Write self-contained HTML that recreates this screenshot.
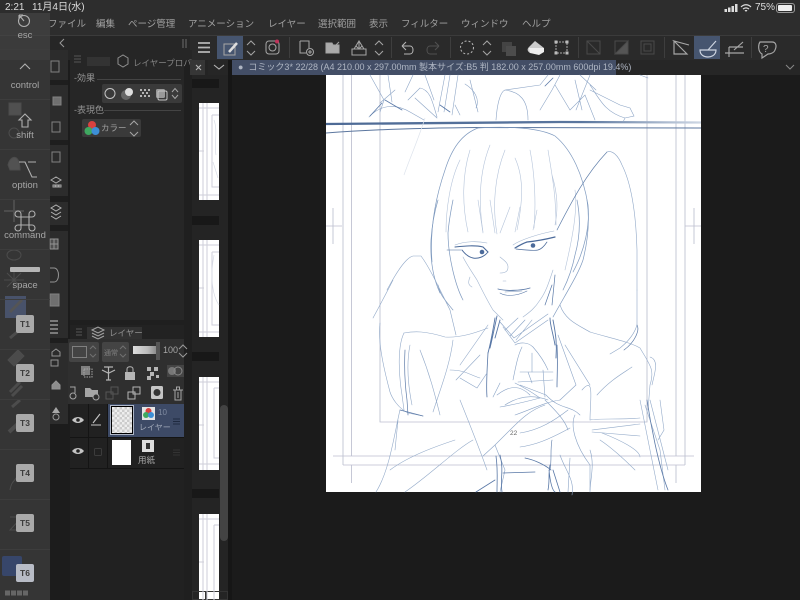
<!DOCTYPE html>
<html><head><meta charset="utf-8">
<style>
html,body{margin:0;padding:0;background:#1b1b1b;}
#r{position:relative;width:800px;height:600px;overflow:hidden;background:#1a1a1a;font-family:"Liberation Sans","Noto Sans CJK JP",sans-serif;color:#aaa;filter:blur(.35px);}
.a{position:absolute;}
.t{position:absolute;white-space:nowrap;line-height:1;}
.m{position:absolute;white-space:nowrap;line-height:1;top:20px;font-size:9.500px;color:#a0a0a0;}
.ov{position:absolute;left:0;width:50px;text-align:center;font-size:9.500px;color:#a6a6a6;line-height:1;}
.key{position:absolute;left:16px;width:18px;height:18px;background:#a9a9a9;border-radius:2px;color:#3c3c3c;font-size:8.500px;font-weight:bold;line-height:18px;text-align:center;}
svg{position:absolute;left:0;top:0;}
</style></head><body>
<div id="r">
<!-- top bars -->
<div class="a" style="left:0;top:0;width:800px;height:35px;background:#2d2d2d"></div>
<div class="a" style="left:0;top:35px;width:800px;height:25px;background:#2a2a2a;border-top:1px solid #3b3b3b;box-sizing:border-box"></div>
<div class="a" style="left:50px;top:36px;width:140px;height:14px;background:#262626"></div>
<!-- menu -->
<div class="m" style="left:48px">ファイル</div>
<div class="m" style="left:96px">編集</div>
<div class="m" style="left:128px">ページ管理</div>
<div class="m" style="left:188px">アニメーション</div>
<div class="m" style="left:268px">レイヤー</div>
<div class="m" style="left:318px">選択範囲</div>
<div class="m" style="left:369px">表示</div>
<div class="m" style="left:401px">フィルター</div>
<div class="m" style="left:461px">ウィンドウ</div>
<div class="m" style="left:522px">ヘルプ</div>

<!-- canvas area -->
<div class="a" style="left:190px;top:60px;width:610px;height:540px;background:#1b1b1b"></div>
<div class="a" style="left:232px;top:60px;width:568px;height:15px;background:#262626"></div>
<div class="a" style="left:232px;top:60px;width:384px;height:15px;background:#434e66"></div>
<div class="t" style="left:238px;top:62.500px;font-size:9px;color:#aeb5c2">●&nbsp; コミック3* 22/28 (A4 210.00 x 297.00mm 製本サイズ:B5 判 182.00 x 257.00mm 600dpi 19.4%)</div>
<div class="a" style="left:326px;top:75px;width:375px;height:417px;background:#fff"></div>

<!-- sub tool col + panels -->
<div class="a" style="left:50px;top:50px;width:18px;height:550px;background:#2c2c2c"></div>
<div class="a" style="left:50px;top:80px;width:18px;height:5px;background:#1e1e1e"></div>
<div class="a" style="left:50px;top:140px;width:18px;height:5px;background:#1e1e1e"></div>
<div class="a" style="left:50px;top:196px;width:18px;height:6px;background:#1e1e1e"></div>
<div class="a" style="left:50px;top:225px;width:18px;height:6px;background:#1e1e1e"></div>
<div class="a" style="left:50px;top:338px;width:18px;height:5px;background:#1e1e1e"></div>
<div class="a" style="left:50px;top:424px;width:18px;height:176px;background:#1c1c1c"></div>
<div class="a" style="left:68px;top:50px;width:124px;height:550px;background:#262626"></div>
<div class="a" style="left:68px;top:60px;width:2px;height:540px;background:#1c1c1c"></div>
<div class="a" style="left:184px;top:60px;width:8px;height:540px;background:#1f1f1f"></div>
<div class="a" style="left:70px;top:320px;width:114px;height:6px;background:#1f1f1f"></div>
<div class="a" style="left:70px;top:325px;width:114px;height:14px;background:#222"></div>
<!-- property panel -->
<div class="a" style="left:87px;top:57px;width:23px;height:9px;background:#333"></div>
<div class="t" style="left:133px;top:59px;font-size:8.500px;color:#858585">レイヤープロパ</div>
<div class="t" style="left:74px;top:74px;font-size:9px;color:#949494">-効果</div>
<div class="a" style="left:97px;top:79px;width:84px;height:1px;background:#444"></div>
<div class="a" style="left:102px;top:84px;width:80px;height:19px;background:#3a3a3a;border-radius:2px"></div>
<div class="t" style="left:74px;top:106px;font-size:9px;color:#949494">-表現色</div>
<div class="a" style="left:104px;top:110px;width:77px;height:1px;background:#444"></div>
<div class="a" style="left:82px;top:119px;width:59px;height:18px;background:#3a3a3a;border-radius:2px"></div>
<div class="t" style="left:101px;top:124px;font-size:8.500px;color:#a0a0a0">カラー</div>

<!-- layer panel -->
<div class="a" style="left:87px;top:327px;width:55px;height:12px;background:#323232"></div>
<div class="t" style="left:109px;top:329px;font-size:8.500px;color:#929292">レイヤー</div>
<div class="a" style="left:68px;top:339px;width:116px;height:65px;background:#2f2f2f"></div>
<div class="a" style="left:69px;top:342px;width:30px;height:20px;background:#444;border-radius:2px"></div>
<div class="a" style="left:102px;top:342px;width:27px;height:20px;background:#444;border-radius:2px"></div>
<div class="a" style="left:133px;top:346px;width:24px;height:8px;background:linear-gradient(90deg,#ddd,#bbb 60%,#888)"></div>
<div class="a" style="left:156px;top:342px;width:4px;height:18px;background:#555"></div>
<div class="t" style="left:163px;top:346px;font-size:9px;color:#a6a6a6">100</div>
<div class="a" style="left:70px;top:404px;width:114px;height:196px;background:#212121"></div>
<div class="a" style="left:108px;top:404px;width:76px;height:33px;background:#3d4a66"></div>
<div class="a" style="left:70px;top:437px;width:114px;height:1px;background:#141414"></div>
<div class="a" style="left:70px;top:468px;width:114px;height:1px;background:#141414"></div>
<div class="a" style="left:88px;top:404px;width:1px;height:64px;background:#141414"></div>
<div class="a" style="left:107px;top:404px;width:1px;height:64px;background:#141414"></div>
<div class="a" style="left:110px;top:405px;width:24px;height:30px;box-sizing:border-box;border:1px solid #aeb6c6;background:#000"></div>
<div class="a" style="left:112px;top:407px;width:20px;height:26px;background:conic-gradient(#ccc 25%,#eee 0 50%,#ccc 0 75%,#eee 0) 0 0/5px 5px"></div>
<div class="a" style="left:112px;top:440px;width:19px;height:25px;background:#fff"></div>
<div class="a" style="left:142px;top:407px;width:13px;height:13px;background:#e4e4e4"></div>
<div class="a" style="left:142px;top:440px;width:12px;height:12px;background:#ddd"></div>
<div class="a" style="left:146px;top:443px;width:4px;height:6px;background:#333"></div>
<div class="t" style="left:158px;top:409px;font-size:8px;color:#7f8aa0">10</div>
<div class="t" style="left:139px;top:424px;font-size:8px;color:#a0a8b8">レイヤー</div>
<div class="t" style="left:138px;top:456px;font-size:8.500px;color:#a8a8a8">用紙</div>

<!-- thumbnails -->
<div class="a" style="left:192px;top:60px;width:40px;height:540px;background:#242424"></div>
<div class="a" style="left:228px;top:60px;width:4px;height:540px;background:#161616"></div>
<div class="a" style="left:190px;top:60px;width:15px;height:15px;background:#363636"></div>
<div class="a" style="left:208px;top:60px;width:20px;height:15px;background:#262626"></div>
<div class="a" style="left:192px;top:79px;width:27px;height:9px;background:#181818"></div>
<div class="a" style="left:192px;top:216px;width:27px;height:9px;background:#181818"></div>
<div class="a" style="left:192px;top:352px;width:27px;height:9px;background:#181818"></div>
<div class="a" style="left:192px;top:489px;width:27px;height:9px;background:#181818"></div>
<div class="a" style="left:199px;top:103px;width:20px;height:97px;background:#fff"></div>
<div class="a" style="left:199px;top:240px;width:20px;height:97px;background:#fff"></div>
<div class="a" style="left:199px;top:377px;width:20px;height:93px;background:#fff"></div>
<div class="a" style="left:199px;top:514px;width:20px;height:86px;background:#fff"></div>
<div class="a" style="left:220px;top:405px;width:8px;height:136px;background:#434343;border-radius:4px"></div>
<div class="a" style="left:192px;top:591px;width:14px;height:9px;border:1px solid #333;box-sizing:border-box"></div>
<div class="a" style="left:206px;top:591px;width:22px;height:9px;border:1px solid #333;box-sizing:border-box"></div>

<svg width="800" height="600" viewBox="0 0 800 600" fill="none">
<defs><linearGradient id="g1" x1="326" y1="0" x2="701" y2="0" gradientUnits="userSpaceOnUse"><stop offset="0" stop-color="#4d6a95"/><stop offset=".68" stop-color="#5a769e"/><stop offset="1" stop-color="#ced7e4"/></linearGradient></defs>
<!-- thumbnail frames -->
<g stroke="#cdcdd9" stroke-width="1">
<path d="M203 103V200M199 108H219M199 195H219M207 103V200M199 151H204M212 115H219M212 115V187H219"/>
<path d="M203 240V337M199 245H219M199 332H219M207 240V337M199 288H204M212 252H219M212 252V325H219"/>
<path d="M203 377V470M199 382H219M199 464H219M207 377V470M199 425H204M214 388H219M214 388V458H219"/>
<path d="M203 514V600M199 519H219M207 514V600M199 562H204M214 525H219M214 525V600"/>
</g>
<g stroke="#d8dce6" stroke-width=".7"><path d="M214 120C218 130 214 145 216 155M213 162L218 178"/><path d="M214 255C210 275 212 295 219 305"/></g>

<!-- page guides -->
<g stroke="#bcbfd0" stroke-width=".85">
<path d="M343 75V465M351.500 75V456M380 75V422H647V75M676 75V456M685 75V465"/>
<path d="M333 456H694M343 465H685M351.500 465V483M676 465V483M333 208V244M326 226H342M694 208V244M685 226H701"/>
</g>
<!-- panel lines -->
<path d="M326 124L560 122L701 122.500" stroke="url(#g1)" stroke-width="2.300"/>
<path d="M326 133C370 129.500 420 128 480 127.500L701 128" stroke="#5c779f" stroke-width="1"/>
<!-- upper scene -->
<g stroke="#8da5c6" stroke-width=".6" stroke-linecap="round">
<path d="M369 117C380 105 395 103 410 112L424 120"/>
<path d="M380 103L395 90M405 92L413 75M415 98L437 118M408 100L420 88C430 90 432 100 437 117"/>
<path d="M370 75L384 100L380 112M388 75L392 102M425 75L434 100M445 75L438 112M450 75L444 112M458 75L452 115M465 84C475 90 480 100 476 108"/>
<path d="M496 120C497 105 500 92 505 90C520 92 528 100 528 120M505 90L540 85L548 75"/>
<path d="M540 110L552 90L560 75M555 85L570 110L585 95L595 120M590 75L576 110M575 80L582 110M590 90L620 105L630 108L634 116L625 118L623 122M590 85C600 100 605 112 625 118M580 75L596 90"/>
<path d="M640 75L648 78M470 80L478 112M455 105L460 115"/>
</g>
<g stroke="#5b7aa8" stroke-width=".8" stroke-linecap="round">
<path d="M382 103L370 116M440 105L450 112M385 100L402 110M545 86L553 78"/>
</g>
<path d="M425 118C418 140 410 158 404 175" stroke="#dde3ec" stroke-width=".7"/>

<!-- hair -->
<g stroke="#7f9abf" stroke-width=".7" stroke-linecap="round">
<path d="M432 262C430 235 433 205 445 170C452 148 462 134 478 128"/>
<path d="M478 128C510 126 540 128 555 136C572 150 583 175 588 205C590 225 585 250 573 272"/>
<path d="M440 293C434 280 430 262 431 240C432 225 435 210 438 200"/>
<path d="M453 310C445 300 440 295 438 285M463 300C455 285 448 255 448 233C449 220 451 210 453 200"/>
<path d="M587 200C590 220 588 240 583 260C578 275 565 295 553 317"/>
<path d="M577 200C581 220 580 237 575 255C572 270 568 280 563 290"/>
</g>
<g stroke="#b5c4da" stroke-width=".6" stroke-linecap="round">
<path d="M478 200L483 233M490 200L495 233M510 207L500 233M520 207L515 232M537 210L533 230"/>
<path d="M470 150C462 175 462 205 468 232M490 145C480 170 478 200 483 232M505 150C495 175 492 205 497 234M515 158C525 180 522 205 517 230M530 150C535 175 536 205 534 228M548 150C552 175 556 195 556 225M575 190C578 210 572 240 565 270M460 160C450 180 446 210 446 232M552 175C558 195 558 210 555 225"/>
</g>
<!-- face -->
<g stroke="#4b6a9a" stroke-linecap="round" fill="none">
<path d="M455 247C465 246 475 245 483 247L488 252" stroke-width="1.100"/>
<path d="M462 250C465 254 468 257 473 258C478 259 484 257 488 252" stroke-width="1"/>
<path d="M447 250H461" stroke-width=".6"/>
<path d="M515 248C520 245 524 243 527 242C537 241 547 239 555 237" stroke-width="1.200"/>
<path d="M516 249C525 250 534 251 538 250C542 249 545 245 547 242" stroke-width=".7"/>
</g>
<circle cx="482" cy="252" r="2.300" fill="#4b6a9a"/>
<circle cx="533" cy="245.500" r="2.300" fill="#4b6a9a"/>
<g stroke="#a3b6d0" stroke-width=".6" stroke-linecap="round">
<path d="M500 257C505 261 508 263 508 267C508 271 506 273 500 273"/>
<path d="M455 245C465 241 478 241 487 243M513 245C520 240 538 234 554 231"/>
<path d="M503 281H506"/>
<path d="M463 257C467 265 472 272 477 280C483 292 488 302 493 310L503 320"/>
<path d="M553 270C549 282 546 292 540 300C535 308 530 312 523 317"/>
<path d="M470 277C468 282 468 285 472 287"/>
</g>
<g stroke="#5877a6" stroke-linecap="round">
<path d="M498 289C505 291 520 291 530 288" stroke-width=".9"/>
<path d="M500 293C505 296 515 297 527 291" stroke-width=".6"/>
<path d="M505 292L522 291" stroke-width=".4"/>
<path d="M555 275L552 305M552 285L545 305" stroke-width=".7"/>
</g>
<!-- long right curve -->
<g stroke="#5f7eaa" stroke-width=".7" stroke-linecap="round"><path d="M557 230C570 205 585 175 607 152"/></g>
<g stroke="#8fa7c7" stroke-width=".6" stroke-linecap="round">
<path d="M607 152C612 150 618 155 622 165C632 185 636 215 637 250V290"/>
<path d="M637 290V325C635 332 630 340 620 348L610 354"/>
<path d="M387 290C395 275 405 258 413 256L421 256C430 268 440 290 450 310L456 335"/>
<path d="M373 318C380 305 388 290 393 280M380 323C378 340 382 362 390 392C392 398 398 408 408 413L423 416"/>
<path d="M560 305C565 320 578 325 590 332"/>
</g>
<!-- jacket -->
<g stroke="#93aac9" stroke-width=".6" stroke-linecap="round">
<path d="M404 333C415 331 425 331 445 337C460 338 475 333 488 328"/>
<path d="M404 333C398 345 398 370 402 395L404 410M410 345C406 365 408 385 412 405M420 350C430 375 435 395 440 415"/>
<path d="M453 340C450 365 440 390 433 412"/>
<path d="M450 370C465 370 470 375 480 378"/>
<path d="M456 380L480 355M460 365L488 325"/>
<path d="M400 410C395 430 390 470 376 492M398 420L395 450"/>
<path d="M390 470C410 455 440 445 455 440M405 492C430 475 455 450 473 440"/>
<path d="M460 400C470 425 480 450 487 470"/>
<path d="M590 332C610 338 630 342 640 348C650 365 655 370 650 385L648 410"/>
<path d="M650 357C660 360 654 375 652 385"/>
<path d="M597 395C610 380 625 372 632 367M582 390C595 375 590 400 590 420"/>
<path d="M590 420C600 418 620 420 640 418M592 430C610 428 630 425 640 424M592 432L640 436"/>
<path d="M602 433C620 440 640 450 640 457M600 440C615 450 630 465 635 470"/>
<path d="M645 405L660 450L665 490M650 400L668 470M660 400L664 430L658 440"/>
<path d="M640 400C645 425 652 460 658 490"/>
</g>
<g stroke="#5d7ba8" stroke-width=".8" stroke-linecap="round">
<path d="M647 400C650 420 658 465 668 490"/>
<path d="M405 350C404 370 405 385 407 400L408 415" stroke-width=".7"/>
<path d="M624 350C635 342 640 330 637 325" stroke-width=".7"/>
<path d="M400 410L423 416" stroke-width=".7"/>
</g>
<!-- neck / collar -->
<g stroke="#5877a6" stroke-width=".9" stroke-linecap="round">
<path d="M495 318C493 330 491 342 488 353M497 316C494 330 492 340 490 348M500 320L495 338"/>
<path d="M550 318C550 325 553 333 555 345M553 320C556 335 557 345 556 358"/>
<path d="M488 353C487 370 486 385 487 397" stroke-width=".8"/>
<path d="M557 345C558 365 557 375 557 387" stroke-width=".8"/>
</g>
<g stroke="#8ba4c6" stroke-width=".6" stroke-linecap="round">
<path d="M503 327L515 343L548 320M500 322L514 338L548 314M505 330L518 318M510 336L525 320M516 340L532 320M558 335L576 385M565 345L590 385M576 385L560 400"/>
<path d="M515 345C520 342 528 342 533 347C540 355 545 363 548 370"/>
<path d="M522 347C518 355 516 365 513 380M532 353V372M500 383L493 397"/>
<path d="M520 372H553M518 382L553 380M528 372L532 383M543 370L545 397"/>
<path d="M515 383C525 388 533 393 540 398C525 402 512 405 500 407M460 378L477 388L487 373"/>
<path d="M520 385L546 395C560 410 570 405 580 415M497 395C510 385 520 385 530 395"/>
<path d="M505 405C520 395 535 395 548 400M515 415C530 410 545 402 560 400"/>
<path d="M545 405C530 410 520 420 510 430L495 445L483 456"/>
<path d="M520 433C540 430 555 420 568 410M520 447C535 445 548 440 570 428M575 415C570 425 575 445 590 465L590 490"/>
<path d="M545 400C555 410 565 420 568 430"/>
<path d="M560 455C565 470 575 480 572 495M570 458L568 492M590 450C595 465 590 480 590 492"/>
<path d="M495 445L505 470L500 492"/>
</g>
<g stroke="#5877a6" stroke-width=".8" stroke-linecap="round">
<path d="M496 456C498 470 497 480 497 492M500 455C504 470 500 480 502 492"/>
<path d="M503 473L535 472M525 458C535 460 545 465 551 470M549 470C550 480 552 490 555 492M553 470L560 492M550 465C548 475 550 480 548 490M476 492L495 480"/>
<path d="M552 440C550 450 552 460 550 470" stroke-width=".6"/>
</g>
</svg>
<div class="t" style="left:510px;top:431px;font-size:6.500px;color:#666">22</div>

<!-- toolbar + UI icons -->
<svg width="800" height="600" viewBox="0 0 800 600" fill="none">
<!-- status -->
<g fill="#ddd"><rect x="724.500" y="9" width="2.500" height="3"/><rect x="728" y="7.500" width="2.500" height="4.500"/><rect x="731.500" y="6" width="2.500" height="6"/><rect x="735" y="4" width="2.500" height="8"/></g>
<path d="M741 7C744 4 748 4 751 7M743 9C745 7.500 747 7.500 749 9" stroke="#ddd" stroke-width="1.200"/><path d="M744.500 10L746 12L747.500 10Z" fill="#ddd"/>
<rect x="776.500" y="3.500" width="18" height="9" rx="2.500" stroke="#999"/><rect x="778" y="5" width="14" height="6" rx="1" fill="#eee"/>
<!-- toolbar -->
<rect x="217" y="36" width="26" height="23" fill="#46556f"/>
<rect x="694" y="36" width="26" height="23" fill="#46556f"/>
<path d="M198 43H210M198 47.500H210M198 52H210" stroke="#b5b5b5" stroke-width="1.700"/>
<g stroke="#a4a4a4" stroke-width="1.050">
<rect x="224" y="44" width="11" height="11"/><path d="M229 52L237 43" stroke-width="2.500" stroke="#ddd"/>
<path d="M247 45L251 41L255 45M247 51L251 55L255 51"/>
<rect x="266" y="41" width="13" height="13" rx="3"/><circle cx="272.500" cy="47.500" r="3.500"/><circle cx="277" cy="41.500" r="2" fill="#c0335a" stroke="none"/>
<path d="M300 41H309V48M300 41V53H306"/><circle cx="310" cy="52" r="3.500"/><path d="M308 52H312M310 50V54"/>
<path d="M326 43H332L333 45H339V53H326Z" fill="#aaa"/><path d="M336 45L339 42"/>
<path d="M352 55H366V49H352ZM354 49L359 41L364 49"/><path d="M359 42V48M356 46L359 49L362 46"/>
<path d="M375 45L379 41L383 45M375 51L379 55L383 51"/>
<path d="M402 46H410C414 46 414 54 410 54H404M402 46L406 42M402 46L406 50" stroke="#b5b5b5"/>
<path d="M439 46H430C426 46 426 54 430 54H437M439 46L435 42M439 46L435 50" stroke="#505050"/>
<circle cx="467" cy="47.500" r="6.500" stroke-dasharray="2 2" stroke="#b5b5b5"/>
<path d="M483 45L487 41L491 45M483 51L487 55L491 51"/>
</g>
<path d="M502 42H512V52H502Z" fill="#444"/><path d="M506 46H516V56H506Z" fill="#4c4c4c"/>
<path d="M535 41L529 47C527 49 527 51 530 53H541L544 48Z" fill="#ccc"/><path d="M529 48H544V52L539 55L530 53Z" fill="#eee"/>
<g stroke="#aaa" stroke-width="1"><rect x="556" y="42" width="11" height="11" stroke-dasharray="2 1"/><rect x="554.500" y="40.500" width="3" height="3" fill="#bbb" stroke="none"/><rect x="565.500" y="40.500" width="3" height="3" fill="#bbb" stroke="none"/><rect x="554.500" y="51.500" width="3" height="3" fill="#bbb" stroke="none"/><rect x="565.500" y="51.500" width="3" height="3" fill="#bbb" stroke="none"/></g>
<g stroke="#4a4a4a" stroke-width="1"><rect x="587" y="41" width="13" height="13"/><path d="M587 41L600 54"/><rect x="615" y="41" width="13" height="13"/><path d="M628 41V54H615Z" fill="#555"/><rect x="641" y="41" width="13" height="13"/><rect x="644" y="44" width="7" height="7"/></g>
<g stroke="#3e3e3e"><path d="M289.500 37V58M391.500 37V58M450.500 37V58M578.500 37V58M664.500 37V58M751.500 37V58"/></g>
<g stroke="#a8a8a8" stroke-width="1.150">
<path d="M674 41V54H687L674 41L689 45"/>
<path d="M700 50H716C716 56 710 57 708 57C704 57 700 55 700 50ZM708 50L716 41" stroke="#cfd6e2"/>
<path d="M725 53H744M729 47V57M734 50L743 42M729 47H743"/>
<path d="M760 42H772C776 42 777 46 775 50C774 53 770 54 768 54L762 58V54C758 52 758 45 760 42Z"/>
</g>
<text x="763" y="52" font-size="10" fill="#a8a8a8" font-family="Liberation Sans">?</text>
<path d="M196 65L201 70M201 65L196 70" stroke="#b5b5b5" stroke-width="1.100"/>
<path d="M214 65L219 69L224 65" stroke="#b5b5b5" stroke-width="1.100"/>
<path d="M786 65L790 69L794 65" stroke="#888" stroke-width="1"/>
<path d="M64 39L60 43L64 47" stroke="#999"/>
<path d="M183 39V48M186 39V48" stroke="#555" stroke-width="1.500"/>
<path d="M74 56H81M74 59H81M74 62H81" stroke="#555"/>
<path d="M118 58L123 55L128 58V64L123 67L118 64Z" stroke="#909090"/>
<!-- effect icons -->
<circle cx="110" cy="93.500" r="5" stroke="#c5c5c5"/>
<circle cx="126" cy="95" r="5" fill="#666"/><circle cx="129" cy="92" r="4" fill="#ddd"/>
<path d="M140 89h2v2h-2zM144 89h2v2h-2zM148 89h2v2h-2zM142 92h2v2h-2zM146 92h2v2h-2zM140 95h2v2h-2zM144 95h2v2h-2zM148 95h2v2h-2z" fill="#b5b5b5"/>
<rect x="156" y="89" width="9" height="9" rx="1.500" fill="#999"/><rect x="158" y="91" width="9" height="9" rx="1.500" stroke="#c5c5c5"/>
<path d="M172 92L175 88.500L178 92M172 95L175 98.500L178 95" stroke="#a5a5a5"/>
<circle cx="92" cy="125" r="4" fill="#d9413f"/><circle cx="88.500" cy="131" r="4" fill="#3fa860"/><circle cx="95.500" cy="131" r="4" fill="#3d8fd6"/>
<path d="M130 125L134 121L138 125M130 132L134 136L138 132" stroke="#a5a5a5"/>
<!-- layer controls -->
<path d="M92 330L98 327L104 330L98 333ZM92 333L98 336L104 333M92 336L98 339L104 336" stroke="#a5a5a5"/>
<path d="M76 329H82M76 332H82M76 335H82" stroke="#555"/>
<rect x="72.500" y="346.500" width="14" height="11" stroke="#808080"/>
<path d="M90 349L93 346L96 349M90 354L93 357L96 354" stroke="#707070"/>
<path d="M120 349L123 346L126 349M120 354L123 357L126 354" stroke="#707070"/>
<text x="104" y="355" font-size="7" fill="#808080" font-family="Noto Sans CJK JP">通常</text>
<path d="M179 349L183 345L187 349M179 353L183 357L187 353" stroke="#999"/>
<!-- row 1 -->
<rect x="81" y="366" width="9" height="9" fill="#808080"/><rect x="84" y="369" width="8" height="8" stroke="#a5a5a5" stroke-dasharray="1.500 1"/>
<path d="M104 367H113M108.500 367V380M106 380H111M102 370L108 373M115 370L109 373" stroke="#b5b5b5" stroke-width="1.200"/>
<rect x="125" y="372" width="10" height="8" fill="#b5b5b5"/><path d="M127 372V369C127 366 133 366 133 369V372" stroke="#b5b5b5"/>
<path d="M147 367h4v4h-4zM154 367h4v4h-4zM150 372h4v4h-4zM147 376h4v4h-4zM156 375h3v3h-3z" fill="#b5b5b5"/>
<rect x="167" y="365" width="17" height="12" fill="#444"/><circle cx="172" cy="371" r="4" fill="#777"/><circle cx="178" cy="371" r="4" stroke="#888"/>
<!-- row 2 -->
<path d="M70 387H75V393" stroke="#a5a5a5"/><circle cx="73" cy="396" r="3" stroke="#a5a5a5"/>
<path d="M85 388H90L92 390H98V397H85Z" fill="#a5a5a5"/><circle cx="96" cy="397" r="3" stroke="#a5a5a5" fill="#2f2f2f"/>
<rect x="106" y="392" width="7" height="7" stroke="#555"/><rect x="111" y="387" width="7" height="7" stroke="#555"/>
<rect x="128" y="392" width="7" height="7" stroke="#b5b5b5"/><rect x="133" y="387" width="7" height="7" stroke="#b5b5b5"/>
<rect x="151" y="386" width="12" height="13" rx="1.500" fill="#c5c5c5"/><circle cx="157" cy="392.500" r="3.500" fill="#333"/>
<path d="M173 390H183M175 390V400H181V390M176.500 390V387H179.500V390M178 392V398" stroke="#a5a5a5"/>
<!-- eyes -->
<path d="M72 420C75 416 81 416 84 420C81 424 75 424 72 420Z" fill="#c5c5c5"/><circle cx="78" cy="420" r="1.800" fill="#222"/>
<path d="M72 451C75 447 81 447 84 451C81 455 75 455 72 451Z" fill="#c5c5c5"/><circle cx="78" cy="451" r="1.800" fill="#222"/>
<path d="M91 425H101M93 423L100 414" stroke="#c5c5c5" stroke-width="1.100"/>
<rect x="94.500" y="448.500" width="7" height="7" rx="1" stroke="#3c3c3c"/>
<circle cx="148.500" cy="411" r="3" fill="#d9413f"/><circle cx="146" cy="415" r="3" fill="#3fa860"/><circle cx="151" cy="415" r="3" fill="#3d8fd6"/>
<path d="M173 419H180M173 421.500H180M173 424H180" stroke="#1f2a40" stroke-width="1.100"/>
<path d="M173 450H180M173 452.500H180M173 455H180" stroke="#333"/>
<!-- subtool col icons -->
<g stroke="#8c8c8c" stroke-width="1" opacity=".9">
<rect x="51" y="61" width="8" height="11"/><rect x="53" y="97" width="8" height="8" fill="#777"/><rect x="52" y="122" width="8" height="10"/>
<path d="M52 152H60V162H52Z"/>
<path d="M51 180L56 177L61 180L56 183ZM53 185h2v2h-2zM56 185h2v2h-2zM59 185h2v2h-2z" stroke="#b5b5b5"/>
<path d="M51 208L56 205L61 208L56 211ZM51 212L56 215L61 212M51 216L56 219L61 216" stroke="#c0c0c0"/>
<path d="M50 239H58V249H50ZM54 239V249M50 244H58" stroke="#a0a0a0" fill="#555"/>
<path d="M50 268H54C60 268 60 282 54 282H50" stroke="#a0a0a0"/>
<rect x="50" y="294" width="9" height="12" fill="#777"/>
<path d="M50 321H58M50 325H58M50 329H58M50 333H58" stroke="#a0a0a0" stroke-width="1.400"/>
<path d="M52 352L56 349L60 352V356H52ZM51 360H58V366H51Z" stroke="#a0a0a0"/>
<path d="M52 385L56 381L60 385V389H52Z" stroke="#a0a0a0" fill="#999"/>
<path d="M52 413L56 407L60 413" fill="#b5b5b5" stroke="none"/><circle cx="56" cy="417" r="3" stroke="#a5a5a5"/>
</g>
</svg>

<!-- assistive overlay -->
<div class="a" style="left:0;top:13px;width:50px;height:587px;background:rgba(72,72,72,.6)"></div>
<svg width="800" height="600" viewBox="0 0 800 600" fill="none">
<g stroke="#4c4c4c" stroke-width="1">
<rect x="9" y="103" width="12" height="12" fill="#505050"/>
<circle cx="14" cy="133" r="5"/>
<path d="M8 165C10 155 20 153 20 170H10Z" fill="#525252"/>
<path d="M14 200V222M4 211H24" stroke-width="2"/>
<ellipse cx="14" cy="255" rx="7" ry="5"/>
<path d="M14 270V290M4 280H24M7 273L21 287M21 273L7 287"/>
<rect x="5" y="296" width="21" height="22" fill="#48526a" stroke="none"/>
<path d="M10 312L22 300" stroke-width="3" stroke="#555"/>
<path d="M10 338L22 328" stroke-width="3"/>
<path d="M8 360L18 350L24 356L14 366Z" fill="#4b4b4b"/>
<path d="M10 392L20 382M12 396L22 386" stroke-width="3"/>
<path d="M9 432L20 422" stroke-width="4"/>
<path d="M12 407L20 400" stroke-width="3"/>
<path d="M10 490C12 478 16 484 20 468"/>
<path d="M10 517H22L10 530H22"/>
</g>
<rect x="2" y="556" width="20" height="20" rx="2" fill="#37466a"/>
<path d="M5 593h24" stroke="#666" stroke-width="5" stroke-dasharray="5 1"/>
<g stroke="#3d3d3d"><path d="M0 49.500H50M0 99.500H50M0 149.500H50M0 199.500H50M0 249.500H50M0 299.500H50M0 349.500H50M0 399.500H50M0 449.500H50M0 499.500H50M0 549.500H50"/></g>
<g stroke="#b0b0b0" stroke-width="1.100">
<circle cx="24" cy="21" r="5.500"/><path d="M19 15L24 21M19 15V19M19 15H23"/>
<path d="M20 69L25 64L30 69"/>
<path d="M25 114L31 120H28V127H22V120H19Z"/>
<path d="M19 162H25L32 177H37M28 162H36"/>
<path d="M21 217H29V225H21ZM21 217V214a3 3 0 1 0-3 3H21M29 217H32a3 3 0 1 0-3-3V217M21 225V228a3 3 0 1 1-3-3H21M29 225H32a3 3 0 1 1-3 3V225"/>
</g>
<rect x="10" y="267" width="30" height="5" rx="1" fill="#b5b5b5"/>
</svg>
<div class="ov" style="top:31px">esc</div>
<div class="ov" style="top:81px">control</div>
<div class="ov" style="top:131px">shift</div>
<div class="ov" style="top:181px">option</div>
<div class="ov" style="top:231px">command</div>
<div class="ov" style="top:281px">space</div>
<div class="key" style="top:315px">T1</div>
<div class="key" style="top:364px">T2</div>
<div class="key" style="top:414px">T3</div>
<div class="key" style="top:464px">T4</div>
<div class="key" style="top:514px">T5</div>
<div class="key" style="top:564px;background:#b8bcc6">T6</div>
<!-- status text on top -->
<div class="t" style="left:5px;top:3px;font-size:10px;color:#ddd">2:21</div>
<div class="t" style="left:32px;top:3px;font-size:10px;color:#ddd">11月4日(水)</div>
<div class="t" style="left:755px;top:3px;font-size:10px;color:#ddd">75%</div>
</div>
</body></html>
